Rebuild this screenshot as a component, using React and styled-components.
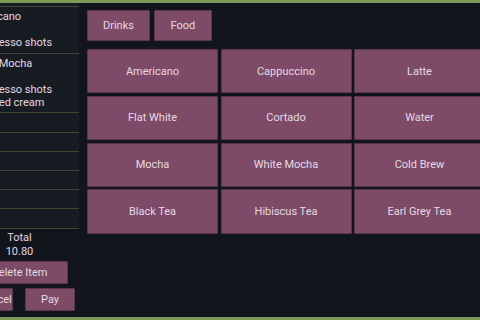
import React from "react"
import styled, { createGlobalStyle } from "styled-components"

const GlobalStyle = createGlobalStyle`
  html, body {
    margin: 0;
    padding: 0;
    background: #12161c;
    overflow: hidden;
  }
  body {
    font-family: Roboto, "Liberation Sans", sans-serif;
    font-size: 11px;
    color: #e4d8e0;
  }
`

const Frame = styled.div`
  display: flex;
  width: 480px;
  height: 314px;
  border-top: 3px solid #7d9b57;
  border-bottom: 3px solid #7d9b57;
  background: #12161c;
  overflow: hidden;
`

const Sidebar = styled.div`
  flex: 0 0 119px;
  margin-left: -40px;
  display: flex;
  flex-direction: column;
`

const OrderList = styled.div`
  padding-top: 3px;
  background: #171c23;
  border-bottom: 1px solid #3c4a33;
`

const OrderItem = styled.div`
  border-top: 1px solid #3c4a33;
  padding: ${p => (p.empty ? "0" : "3px 0")};
  padding-left: 8px;
  height: ${p => (p.empty ? "18.2px" : "auto")};
  line-height: 13.2px;
  white-space: nowrap;
`

const Summary = styled.div`
  padding-top: 2px;
  text-align: center;
  line-height: 14px;
`

const Actions = styled.div`
  display: flex;
  flex-direction: column;
  align-items: center;
  gap: 4px;
  margin-top: 2px;
`

const Button = styled.button`
  display: flex;
  align-items: center;
  justify-content: center;
  box-sizing: border-box;
  width: ${p => p.w || "auto"};
  height: ${p => p.h || "23px"};
  padding: 0 ${p => p.pad || "0"};
  background: #7d4a67;
  border: 1px solid #5c3650;
  border-radius: 1px;
  color: #e6dae2;
  font-family: Roboto, "Liberation Sans", sans-serif;
  font-size: 11px;
  white-space: nowrap;
  cursor: pointer;
`

const ButtonRow = styled.div`
  display: flex;
  gap: 12px;
  align-self: flex-end;
  margin-right: 4px;
`

const Main = styled.div`
  flex: 1;
  margin-left: 8px;
  padding-top: 7px;
  display: flex;
  flex-direction: column;
  gap: 8px;
  min-width: 0;
`

const Categories = styled.div`
  display: flex;
  gap: 4px;
`

const MenuGrid = styled.div`
  display: grid;
  grid-template-columns: repeat(3, 131px);
  grid-auto-rows: 44.4px;
  column-gap: 2.5px;
  row-gap: 2.4px;
`

const order = [
  ["Americano", "\u00a0", "2 Espresso shots"],
  ["White Mocha", "\u00a0", "2 Espresso shots", "Whipped cream"],
]

const menu = [
  "Americano", "Cappuccino", "Latte",
  "Flat White", "Cortado", "Water",
  "Mocha", "White Mocha", "Cold Brew",
  "Black Tea", "Hibiscus Tea", "Earl Grey Tea",
]

export default function App() {
  return (
    <>
      <GlobalStyle />
      <Frame>
        <Sidebar>
          <OrderList>
            {order.map((lines, i) => (
              <OrderItem key={i}>
                {lines.map((l, j) => (
                  <div key={j}>{l}</div>
                ))}
              </OrderItem>
            ))}
            {Array.from({ length: 6 }).map((_, i) => (
              <OrderItem key={"e" + i} empty />
            ))}
          </OrderList>
          <Summary>
            <div>Total</div>
            <div>10.80</div>
          </Summary>
          <Actions>
            <Button w="97px">Delete Item</Button>
            <ButtonRow>
              <Button w="36px">Cancel</Button>
              <Button w="50px">Pay</Button>
            </ButtonRow>
          </Actions>
        </Sidebar>
        <Main>
          <Categories>
            <Button h="31px" pad="15px">Drinks</Button>
            <Button h="31px" pad="15.5px">Food</Button>
          </Categories>
          <MenuGrid>
            {menu.map(m => (
              <Button key={m} h="100%">{m}</Button>
            ))}
          </MenuGrid>
        </Main>
      </Frame>
    </>
  )
}
